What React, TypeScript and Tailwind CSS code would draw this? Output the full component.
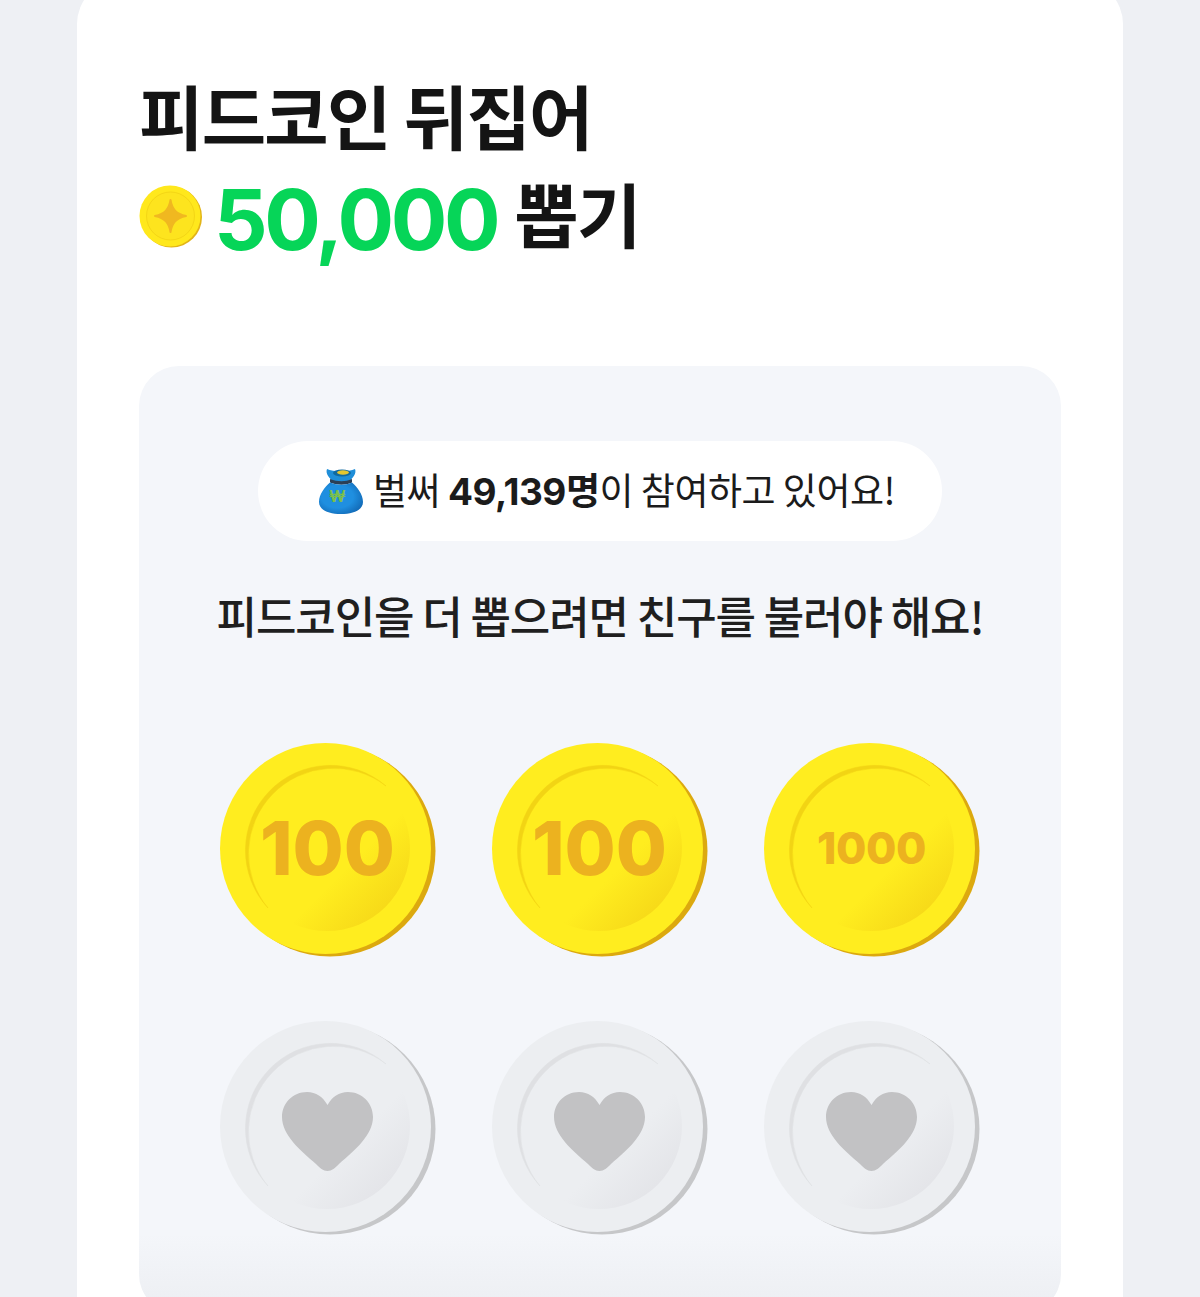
const KR = '"Noto Sans CJK KR","Noto Sans",sans-serif';

function Coin({ id, label, size, silver, baseline, spacing }: { id: string; label?: string; size?: number; silver?: boolean; baseline?: number; spacing?: number }) {
  const c = silver
    ? { edge: '#c6c7c9', face: '#eceef1', arc: '#dfe0e3', a: '#eceef1', b: '#e3e4e8' }
    : { edge: '#dca90f', face: '#ffed1f', arc: '#f2d414', a: '#ffed1f', b: '#f6d818' };
  return (
    <svg width="216" height="215" viewBox="0 0 216 215" className="shrink-0">
      <defs>
        <linearGradient id={id} x1="0.62" y1="0.62" x2="0.88" y2="0.88">
          <stop offset="0" stopColor={c.a} />
          <stop offset="1" stopColor={c.b} />
        </linearGradient>
      </defs>
      <circle cx="110" cy="109" r="105.5" fill={c.edge} />
      <circle cx="105.5" cy="106.5" r="105.5" fill={c.face} />
      <circle cx="107" cy="106" r="83" fill={`url(#${id})`} />
      <path d="M48 166 A85 85 0 0 1 166 44 A85.4 85.4 0 0 0 48 166 Z" fill={c.arc} stroke={c.arc} strokeWidth="0.5" strokeLinejoin="round" />
      {label && (
        <text x="107.5" y={baseline} textAnchor="middle" fill="#ecb21f" fontFamily="Inter, sans-serif" fontWeight="800" fontSize={size} letterSpacing={spacing}>
          {label}
        </text>
      )}
      {silver && (
        <path d="M107.5 151 C103 151 100 148 96 144 C80 130 62 115 62 97 C62 83 73 72 87 72 C96 72 103 77 107.5 85 C112 77 119 72 128 72 C142 72 153 83 153 97 C153 115 135 130 119 144 C115 148 112 151 107.5 151 Z" fill="#c2c2c4" />
      )}
    </svg>
  );
}

function SmallCoin() {
  return (
    <svg width="63" height="63" viewBox="0 0 63 63" className="mt-[6px] shrink-0">
      <circle cx="32.5" cy="32" r="30.5" fill="#e2b417" />
      <circle cx="31" cy="31" r="30.5" fill="#ffe81c" />
      <circle cx="31.5" cy="31" r="24" fill="#fde41e" stroke="#f4d616" strokeWidth="1" />
      <path d="M31.5 15 C33 24 37 29 47 31 C37 33 33 38 31.5 47 C30 38 26 33 16 31 C26 29 30 24 31.5 15 Z" fill="#f0b820" stroke="#f0b820" strokeWidth="2" strokeLinejoin="round" />
    </svg>
  );
}

function Bag() {
  return (
    <svg width="46" height="48" viewBox="0 0 46 48" className="shrink-0">
      <defs>
        <radialGradient id="bagG" cx="0.42" cy="0.45" r="0.65">
          <stop offset="0.55" stopColor="#1f8fe0" />
          <stop offset="1" stopColor="#1168b4" />
        </radialGradient>
      </defs>
      <path d="M9 2 C15 5 31 5 37 2 C39 7 34 11 32 14 C25 16 21 16 14 14 C12 11 7 7 9 2 Z" fill="#1f8ed8" />
      <ellipse cx="24" cy="6" rx="9" ry="3.5" fill="#11699f" />
      <ellipse cx="25" cy="5.5" rx="6" ry="2.2" fill="#e5c730" />
      <path d="M12 12 C20 15 27 15 34 12 L34 15.5 C27 18.5 20 18.5 12 15.5 Z" fill="#2b3f56" />
      <path d="M12 15.5 C20 18.5 27 18.5 34 15.5 C39 20 45 27 45 35 C45 43 35 47 23 47 C11 47 1 43 1 35 C1 27 7 20 12 15.5 Z" fill="url(#bagG)" />
      <text x="19" y="35" textAnchor="middle" fontSize="16" fontWeight="700" fill="#7cc04a" fontFamily="Inter, sans-serif">₩</text>
    </svg>
  );
}

export default function App() {
  return (
    <div className="h-[1297px] w-[1200px] overflow-hidden bg-[#eef0f4]" style={{ fontFamily: KR }}>
      <div className="mx-[77px] -mt-[20px] h-[1400px] rounded-[44px] bg-white px-[62px] pt-[86px]">
        <h1 className="text-[70px] font-bold leading-[98px] tracking-[-0.025em] text-[#141414]">
          <div>피드코인 뒤집어</div>
          <div className="flex items-center">
            <SmallCoin />
            <span className="ml-[12px] mt-[14px] font-['Inter'] text-[84px] font-bold leading-[84px] tracking-[-0.04em] text-[#06d558]">50,000</span>
            <span className="ml-[17px]">뽑기</span>
          </div>
        </h1>
        <div className="relative mt-[104px] h-[948px] overflow-hidden rounded-[40px] bg-[#f4f6fa] pt-[75px]">
          <div className="mx-auto flex h-[100px] w-[684px] items-center justify-center gap-[9px] rounded-full bg-white pl-[13px] text-[37px] tracking-[-0.013em] text-[#1b1b1b]">
            <Bag />
            <span>
              벌써 <b className="font-bold [font-family:Inter,'Noto_Sans_CJK_KR',sans-serif]">49,139명</b>이 참여하고 있어요!
            </span>
          </div>
          <p className="mt-[42px] text-center text-[44px] font-medium leading-[64px] tracking-[-0.025em] text-[#1f1f1f]">
            피드코인을 더 뽑으려면 친구를 불러야 해요!
          </p>
          <div className="mt-[95px] grid grid-cols-[216px_216px_216px] justify-center gap-x-[56px] gap-y-[63px]">
            <Coin id="a" label="100" size={74} baseline={133} />
            <Coin id="b" label="100" size={74} baseline={133} />
            <Coin id="c" label="1000" size={44} baseline={122} spacing={-0.5} />
            <Coin id="d" silver />
            <Coin id="e" silver />
            <Coin id="f" silver />
          </div>
          <div className="absolute inset-x-0 bottom-0 h-[80px] bg-gradient-to-b from-transparent to-[#eceef2]" />
        </div>
      </div>
    </div>
  );
}
